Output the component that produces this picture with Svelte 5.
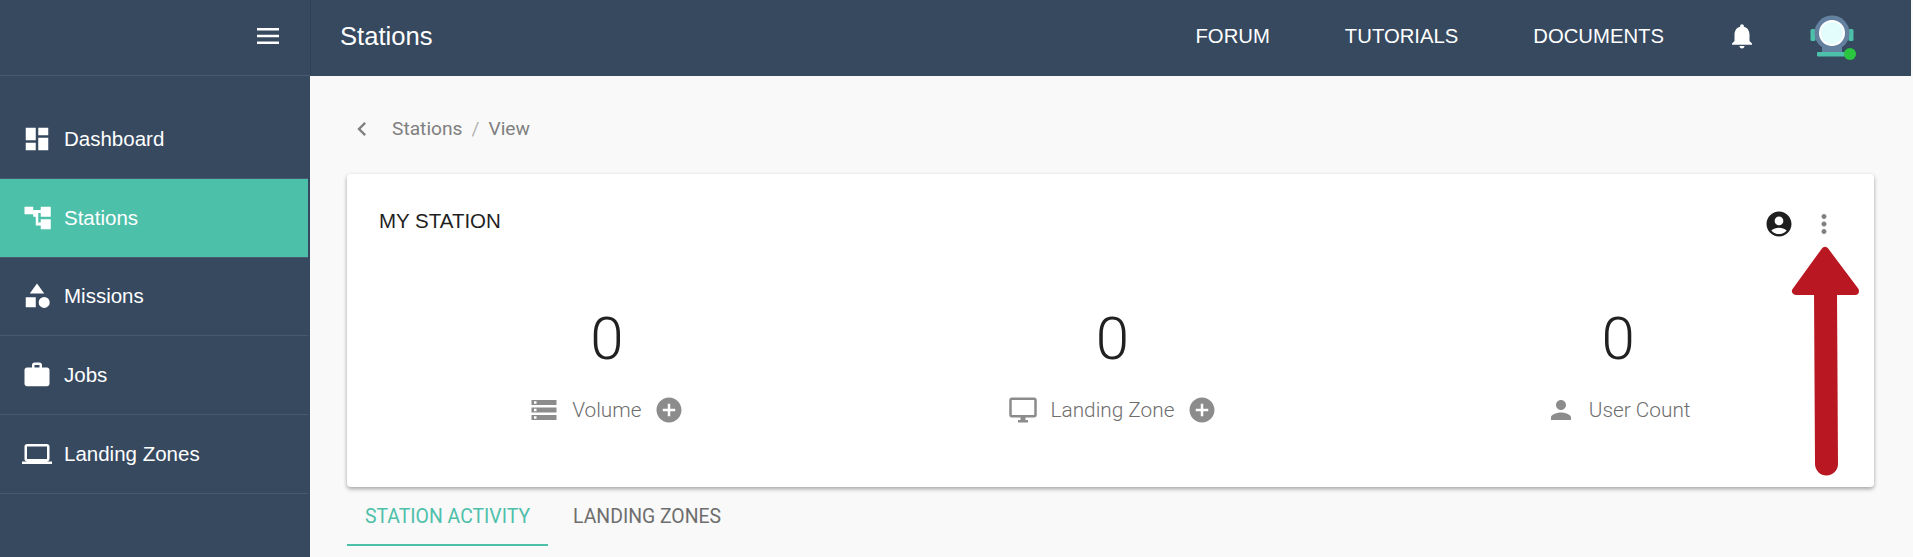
<script>
    const navItems = [
        { label: 'Dashboard', icon: 'dashboard' },
        { label: 'Stations', icon: 'stations', active: true },
        { label: 'Missions', icon: 'missions' },
        { label: 'Jobs', icon: 'jobs' },
        { label: 'Landing Zones', icon: 'laptop' }
    ];

    const links = ['FORUM', 'TUTORIALS', 'DOCUMENTS'];

    const icons = {
        dashboard: 'M3 13h8V3H3v10zm0 8h8v-6H3v6zm10 0h8V11h-8v10zm0-18v6h8V3h-8z',
        stations: 'M2 3h7v2.5h6V3h8v8h-8V8h-2v7.5h2V13h8v8h-8v-3h-4v-7H9V9H2z',
        missions: 'M12 2 6.2 10h11.6zM3 13h8v8H3zM17.75 12.75a4.4 4.4 0 1 0 0 8.8 4.4 4.4 0 0 0 0-8.8z',
        jobs: 'M20 6h-4V4c0-1.1-.9-2-2-2h-4c-1.1 0-2 .9-2 2v2H4C2.9 6 2 6.9 2 8v11c0 1.1.9 2 2 2h16c1.1 0 2-.9 2-2V8c0-1.1-.9-2-2-2zm-6 0h-4V4h4v2z',
        laptop: 'M20 18c1.1 0 2-.9 2-2V6c0-1.1-.9-2-2-2H4c-1.1 0-2 .9-2 2v10c0 1.1.9 2 2 2H0v2h24v-2h-4zM4 6h16v10H4V6z'
    };

    const stats = [
        { value: 0, label: 'Volume', icon: 'M2 20h20v-4H2v4zm2-3h2v2H4v-2zM2 4v4h20V4H2zm4 3H4V5h2v2zm-4 7h20v-4H2v4zm2-3h2v2H4v-2z', add: true },
        { value: 0, label: 'Landing Zone', icon: 'M21 2H3c-1.1 0-2 .9-2 2v12c0 1.1.9 2 2 2h7v2H8v2h8v-2h-2v-2h7c1.1 0 2-.9 2-2V4c0-1.1-.9-2-2-2zm0 14H3V4h18v12z', add: true },
        { value: 0, label: 'User Count', icon: 'M12 12c2.21 0 4-1.79 4-4s-1.79-4-4-4-4 1.79-4 4 1.79 4 4 4zm0 2c-2.67 0-8 1.34-8 4v2h16v-2c0-2.66-5.33-4-8-4z', add: false }
    ];
</script>

<div class="layout">
    <aside class="sidebar">
        <div class="brand">
            <svg class="menu" viewBox="0 0 22 16"><path d="M0 0h22v2.4H0zM0 6.8h22v2.4H0zM0 13.6h22V16H0z" /></svg>
        </div>
        <nav class="nav">
            {#each navItems as item}
                <div class="nav-item" class:active={item.active}>
                    <svg viewBox="0 0 24 24"><path d={icons[item.icon]} /></svg>
                    <span>{item.label}</span>
                </div>
            {/each}
        </nav>
    </aside>

    <div class="main">
        <header class="topbar">
            <h1>Stations</h1>
            <div class="links">
                {#each links as link}
                    <span>{link}</span>
                {/each}
            </div>
            <svg class="bell" viewBox="0 0 24 24"><path d="M12 22c1.1 0 2-.9 2-2h-4c0 1.1.9 2 2 2zm6-6v-5c0-3.07-1.63-5.64-4.5-6.32V4c0-.83-.67-1.5-1.5-1.5s-1.5.67-1.5 1.5v.68C7.64 5.36 6 7.92 6 11v5l-2 2v1h16v-1l-2-2z" /></svg>
            <div class="avatar">
                <svg viewBox="0 0 48 48">
                    <rect x="2.5" y="17" width="5" height="12" rx="1.5" fill="#4dc0aa" />
                    <rect x="40.5" y="17" width="5" height="12" rx="1.5" fill="#4dc0aa" />
                    <circle cx="24" cy="21" r="17.5" fill="#64809f" />
                    <rect x="14" y="35" width="20" height="6" fill="#64809f" />
                    <rect x="9" y="40" width="31" height="4.5" rx="1" fill="#4dc0aa" />
                    <circle cx="24" cy="21" r="13" fill="#fff" />
                    <circle cx="24" cy="21" r="11" fill="#e2fdfb" />
                    <circle cx="42" cy="42" r="6" fill="#2bc63f" />
                </svg>
            </div>
        </header>

        <main class="content">
            <div class="crumbs">
                <svg viewBox="0 0 24 24"><path d="M15.41 7.41 14 6l-6 6 6 6 1.41-1.41L10.83 12z" /></svg>
                <span>Stations</span>
                <span class="sep">/</span>
                <span>View</span>
            </div>

            <section class="card">
                <div class="card-head">
                    <h2>MY STATION</h2>
                    <svg class="account" viewBox="0 0 24 24"><path d="M12 2C6.48 2 2 6.48 2 12s4.48 10 10 10 10-4.48 10-10S17.52 2 12 2zm0 4c1.93 0 3.5 1.57 3.5 3.5S13.93 13 12 13s-3.5-1.57-3.5-3.5S10.07 6 12 6zm0 14c-2.03 0-4.43-.82-6.14-2.88C7.55 15.8 9.68 15 12 15s4.45.8 6.14 2.12C16.43 19.18 14.03 20 12 20z" /></svg>
                    <svg class="more" viewBox="0 0 24 24"><path d="M12 8c1.1 0 2-.9 2-2s-.9-2-2-2-2 .9-2 2 .9 2 2 2zm0 2c-1.1 0-2 .9-2 2s.9 2 2 2 2-.9 2-2-.9-2-2-2zm0 6c-1.1 0-2 .9-2 2s.9 2 2 2 2-.9 2-2-.9-2-2-2z" /></svg>
                </div>
                <div class="stats">
                    {#each stats as stat}
                        <div class="stat">
                            <div class="value">{stat.value}</div>
                            <div class="label">
                                <svg class="label-icon" viewBox="0 0 24 24"><path d={stat.icon} /></svg>
                                <span>{stat.label}</span>
                                {#if stat.add}
                                    <svg class="add" viewBox="0 0 24 24"><path d="M12 2C6.48 2 2 6.48 2 12s4.48 10 10 10 10-4.48 10-10S17.52 2 12 2zm5 11h-4v4h-2v-4H7v-2h4V7h2v4h4v2z" /></svg>
                                {/if}
                            </div>
                        </div>
                    {/each}
                </div>
            </section>

            <div class="tabs">
                <div class="tab selected">STATION ACTIVITY</div>
                <div class="tab">LANDING ZONES</div>
            </div>
        </main>
    </div>

    <!-- annotation drawn over the screenshot -->
    <svg class="arrow" viewBox="0 0 70 232">
        <path d="M34 6 L5 46 H64 Z" fill="#b91823" stroke="#b91823" stroke-width="8" stroke-linejoin="round" />
        <path d="M34.5 46 L35.5 219" fill="none" stroke="#b91823" stroke-width="23" stroke-linecap="round" />
    </svg>
</div>

<style>
    :global(body) {
        margin: 0;
        background: #f9f9f9;
    }

    .layout {
        position: relative;
        display: flex;
        width: 1911px;
        height: 557px;
        overflow: hidden;
        font-family: 'Liberation Sans', Arial, sans-serif;
    }

    .sidebar {
        width: 310px;
        flex-shrink: 0;
        background: #36495f;
        color: #fff;
    }

    .brand {
        height: 76px;
        box-sizing: border-box;
        display: flex;
        align-items: center;
        justify-content: flex-end;
        padding: 0 31px 4px 0;
        border-bottom: 1px solid #475a71;
    }

    .menu {
        width: 22px;
        height: 16px;
        fill: #fff;
    }

    .nav {
        padding-top: 24px;
    }

    .nav-item {
        height: 77.75px;
        width: 286px;
        display: flex;
        align-items: center;
        gap: 12px;
        padding-left: 22px;
        border-bottom: 1px solid #475a71;
        font-size: 20.5px;
    }

    .nav-item svg {
        width: 30px;
        height: 30px;
        fill: #fff;
    }

    .nav-item.active {
        background: #4dc0aa;
    }

    .main {
        flex: 1;
        min-width: 0;
        display: flex;
        flex-direction: column;
    }

    .topbar {
        height: 76px;
        box-sizing: border-box;
        flex-shrink: 0;
        background: #36495f;
        color: #fff;
        display: flex;
        align-items: center;
        padding: 0 0 3px 29px;
        border-left: 1px solid #2f4156;
    }

    h1 {
        margin: 0;
        flex: 1;
        font-size: 25.6px;
        font-weight: 400;
    }

    .links {
        display: flex;
        gap: 75px;
        font-size: 20.3px;
    }

    .bell {
        width: 30px;
        height: 30px;
        fill: #fff;
        margin: 0 0 1px 63px;
    }

    .avatar {
        width: 48px;
        height: 48px;
        margin: 0 55px 1px 51px;
    }

    .avatar svg {
        display: block;
        width: 100%;
        height: 100%;
    }

    .content {
        flex: 1;
        background: #f9f9f9;
        padding: 0 37px;
        font-family: Roboto, sans-serif;
    }

    .crumbs {
        height: 91px;
        padding-top: 7px;
        display: flex;
        align-items: center;
        font-size: 19.2px;
        color: #808080;
    }

    .crumbs svg {
        width: 28px;
        height: 28px;
        fill: #808080;
        margin: 0 16px 0 1px;
    }

    .sep {
        color: #b5b5b5;
        margin: 0 9px;
    }

    .card {
        height: 313px;
        background: #fff;
        border-radius: 4px;
        box-shadow: 0 2px 4px rgba(0, 0, 0, 0.35);
        padding: 33px 3px 0 7px;
        box-sizing: border-box;
    }

    .card-head {
        display: flex;
        align-items: center;
        padding: 0 32px 0 25px;
        height: 34px;
    }

    h2 {
        margin: 0 auto 6px 0;
        font-family: 'Liberation Sans', Arial, sans-serif;
        font-size: 20.5px;
        font-weight: 400;
        color: #1f1f1f;
    }

    .account {
        width: 30px;
        height: 30px;
        fill: #1f1f1f;
    }

    .more {
        width: 30px;
        height: 30px;
        fill: #808080;
        margin-left: 15px;
    }

    .stats {
        display: grid;
        grid-template-columns: repeat(3, 1fr);
        margin-top: 63px;
    }

    .stat {
        display: flex;
        flex-direction: column;
        align-items: center;
    }

    .value {
        font-size: 60px;
        font-weight: 300;
        line-height: 70px;
        color: #212121;
    }

    .label {
        display: flex;
        align-items: center;
        gap: 13px;
        margin-top: 21px;
        font-size: 20.8px;
        font-weight: 300;
        color: #6e6e6e;
    }

    .label-icon {
        width: 30px;
        height: 30px;
        fill: #8c8c8c;
    }

    .add {
        width: 30px;
        height: 30px;
        fill: #8c8c8c;
    }

    .tabs {
        display: flex;
        gap: 7px;
    }

    .tab {
        height: 56px;
        padding: 1px 18px 0;
        display: flex;
        align-items: center;
        font-size: 19.4px;
        color: #6e6e6e;
    }

    .tab.selected {
        color: #4dc0aa;
        border-bottom: 2px solid #4dc0aa;
    }

    .arrow {
        position: absolute;
        left: 1791px;
        top: 245px;
        width: 70px;
        height: 232px;
    }
</style>
